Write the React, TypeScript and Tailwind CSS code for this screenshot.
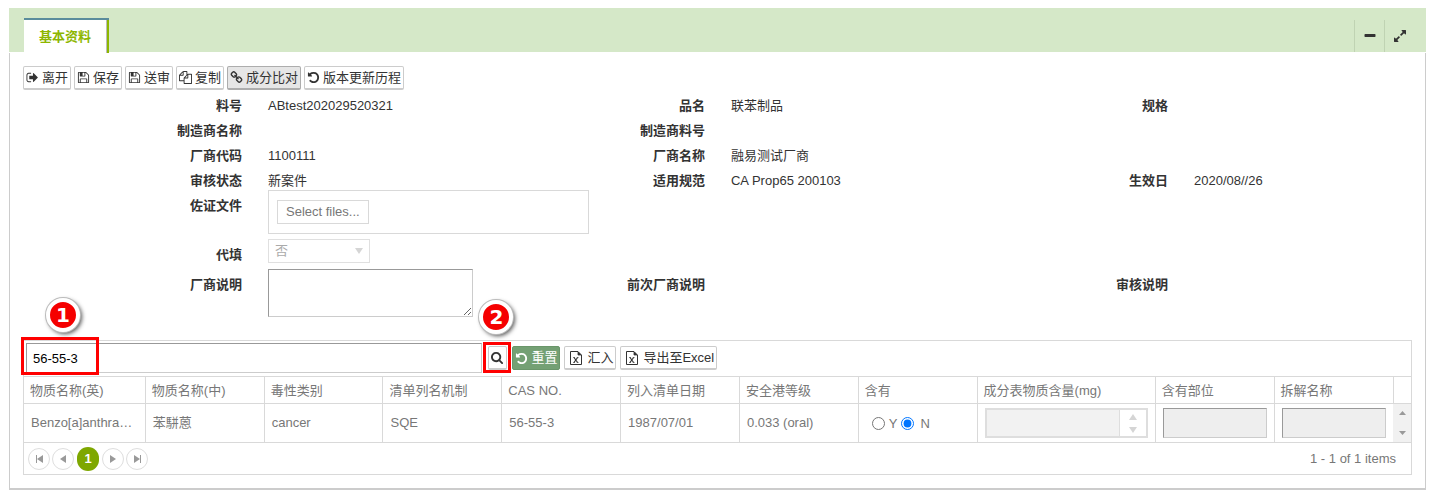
import React from "react";

const ICONS = {
  signOut:
    "M704 1440q0 4 1 20t.5 26.5-3 23.5-10 19.5-20.5 6.5h-320q-119 0-203.5-84.5t-84.5-203.5v-704q0-119 84.5-203.5t203.5-84.5h320q13 0 22.5 9.5t9.5 22.5q0 4 1 20t.5 26.5-3 23.5-10 19.5-20.5 6.5h-320q-66 0-113 47t-47 113v704q0 66 47 113t113 47h312l11.5 1 11.5 3 8 5.5 7 9 2 13.5zm928-544q0 26-19 45l-544 544q-19 19-45 19t-45-19-19-45v-288h-448q-26 0-45-19t-19-45v-384q0-26 19-45t45-19h448v-288q0-26 19-45t45-19 45 19l544 544q19 19 19 45z",
  save: "M512 1536h768v-384h-768v384zm896 0h128v-896q0-14-10-38.5t-20-34.5l-281-281q-10-10-34-20t-39-10v416q0 40-28 68t-68 28h-576q-40 0-68-28t-28-68v-416h-128v1280h128v-416q0-40 28-68t68-28h832q40 0 68 28t28 68v416zm-384-928v-320q0-13-9.5-22.5t-22.5-9.5h-192q-13 0-22.5 9.5t-9.5 22.5v320q0 13 9.5 22.5t22.5 9.5h192q13 0 22.5-9.5t9.5-22.5zm640 32v928q0 40-28 68t-68 28h-1344q-40 0-68-28t-28-68v-1344q0-40 28-68t68-28h928q40 0 88 20t76 48l280 280q28 28 48 76t20 88z",
  copy: "M1696 384q40 0 68 28t28 68v1216q0 40-28 68t-68 28h-960q-40 0-68-28t-28-68v-288h-544q-40 0-68-28t-28-68v-672q0-40 20-88t48-76l408-408q28-28 76-48t88-20h416q40 0 68 28t28 68v328q68-40 128-40h416zm-544 213l-299 299h299v-299zm-640-384l-299 299h299v-299zm196 647l316-316v-416h-384v416q0 40-28 68t-68 28h-416v640h512v-256q0-40 20-88t48-76zm956 804v-1152h-384v416q0 40-28 68t-68 28h-416v640h896z",
  link: "M1520 1216q0-40-28-68l-208-208q-28-28-68-28-42 0-72 32 3 3 19 18.5t21.5 21.5 15 19 13 25.5 3.5 27.5q0 40-28 68t-68 28q-15 0-27.5-3.5t-25.5-13-19-15-21.5-21.5-18.5-19q-33 31-33 73 0 40 28 68l206 207q27 27 68 27 40 0 68-26l147-146q28-28 28-67zm-703-705q0-40-28-68l-206-207q-28-28-68-28-39 0-68 27l-147 146q-28 28-28 67 0 40 28 68l208 208q27 27 68 27 42 0 72-31-3-3-19-18.5t-21.5-21.5-15-19-13-25.5-3.5-27.5q0-40 28-68t68-28q15 0 27.5 3.5t25.5 13 19 15 21.5 21.5 18.5 19q33-31 33-73zm895 705q0 120-85 203l-147 146q-83 83-203 83-121 0-204-85l-206-207q-83-83-83-203 0-123 88-209l-88-88q-86 88-208 88-120 0-204-84l-208-208q-84-84-84-204t85-203l147-146q83-83 203-83 121 0 204 85l206 207q83 83 83 203 0 123-88 209l88 88q86-88 208-88 120 0 204 84l208 208q84 84 84 204z",
  undo: "M1664 896q0 156-61 298t-164 245-245 164-298 61q-172 0-327-72.5t-264-204.5q-7-10-6.5-22.5t8.5-20.5l137-138q10-9 25-9 16 2 23 12 73 95 179 147t225 52q104 0 198.5-40.5t163.5-109.5 109.5-163.5 40.5-198.5-40.5-198.5-109.5-163.5-163.5-109.5-198.5-40.5q-98 0-188 35.5t-160 101.5l137 138q31 30 14 69-17 40-59 40h-448q-26 0-45-19t-19-45v-448q0-42 40-59 39-17 69 14l130 129q107-101 244.5-156.5t284.5-55.5q156 0 298 61t245 164 164 245 61 298z",
  search:
    "M1152 832q0-185-131.5-316.5t-316.5-131.5-316.5 131.5-131.5 316.5 131.5 316.5 316.5 131.5 316.5-131.5 131.5-316.5zm512 832q0 52-38 90t-90 38q-54 0-90-38l-343-342q-179 124-399 124-143 0-273.5-55.5t-225-150-150-225-55.5-273.5 55.5-273.5 150-225 225-150 273.5-55.5 273.5 55.5 225 150 150 225 55.5 273.5q0 220-124 399l343 343q37 37 37 90z",
  expand:
    "M883 1056q0 13-10 23l-332 332 144 144q19 19 19 45t-19 45-45 19h-448q-26 0-45-19t-19-45v-448q0-26 19-45t45-19 45 19l144 144 332-332q10-10 23-10t23 10l114 114q10 10 10 23zm781-864v448q0 26-19 45t-45 19-45-19l-144-144-332 332q-10 10-23 10t-23-10l-114-114q-10-10-10-23t10-23l332-332-144-144q-19-19-19-45t19-45 45-19h448q26 0 45 19t19 45z",
  minus:
    "M1600 736v192q0 40-28 68t-68 28h-1216q-40 0-68-28t-28-68v-192q0-40 28-68t68-28h1216q40 0 68 28t28 68z",
};

function Icon({ name, className = "size-[13px]" }: { name: keyof typeof ICONS; className?: string }) {
  return (
    <svg viewBox="0 0 1792 1792" fill="currentColor" aria-hidden="true" className={`shrink-0 ${className}`}>
      <path d={ICONS[name]} />
    </svg>
  );
}

function ExcelIcon() {
  return (
    <svg viewBox="0 0 12 14" fill="none" stroke="currentColor" aria-hidden="true" className="h-3.5 w-3 shrink-0">
      <path d="M0.5 0.5H8L11.5 4V13.5H0.5Z" />
      <path d="M8 1V4H11Z" fill="currentColor" strokeWidth="0.8" />
      <path d="M4 6.5L7.6 11.5M7.6 6.5L4 11.5" strokeWidth="1.2" />
      <path d="M3 6.5H5M6.8 6.5H8.6M3 11.5H5M6.8 11.5H8.6" strokeWidth="0.6" />
    </svg>
  );
}

function Triangle({ dir, className }: { dir: "up" | "down" | "left" | "right"; className: string }) {
  const d = { up: "M0 10L5 0L10 10Z", down: "M0 0H10L5 10Z", left: "M10 0V10L0 5Z", right: "M0 0L10 5L0 10Z" }[dir];
  return (
    <svg viewBox="0 0 10 10" preserveAspectRatio="none" fill="currentColor" aria-hidden="true" className={className}>
      <path d={d} />
    </svg>
  );
}

const BUTTON =
  "flex h-6 items-center gap-[3px] rounded-[2px] border border-b-2 px-0.5 whitespace-nowrap text-[#333]";
const PLAIN = "border-[#ccc] bg-white";

function Badge({ children, className }: { children: string; className: string }) {
  return (
    <span
      className={`pointer-events-none absolute flex size-[34px] items-center justify-center rounded-full border-4 border-white bg-[#f50000] font-['DejaVu_Sans',sans-serif] text-xl leading-none font-bold text-white shadow-[0_0_0_1px_#bbb,2px_2px_4px_#555] ${className}`}
    >
      {children}
    </span>
  );
}

function Field({ label, htmlFor, children }: { label: string; htmlFor?: string; children?: React.ReactNode }) {
  return (
    <div className="flex items-start">
      <label htmlFor={htmlFor} className="w-[47.3%] shrink-0 text-right leading-[25px] font-bold text-[#333]">
        {label}
      </label>
      <div className="ml-[26px] leading-[25px] whitespace-nowrap">{children}</div>
    </div>
  );
}

const COLUMNS = [
  "物质名称(英)",
  "物质名称(中)",
  "毒性类别",
  "清单列名机制",
  "CAS NO.",
  "列入清单日期",
  "安全港等级",
  "含有",
  "成分表物质含量(mg)",
  "含有部位",
  "拆解名称",
];
const VALUES = ["Benzo[a]anthra…", "苯駢蒽", "cancer", "SQE", "56-55-3", "1987/07/01", "0.033 (oral)"];

const PAGER = "flex size-[22px] items-center justify-center rounded-full border border-[#dedede] text-[#999]";
const DISABLED_BOX = "block h-[30px] w-full border border-t-[#999] border-r-[#ccc] border-b-[#ccc] border-l-[#999] bg-[#eee]";

export default function App() {
  return (
    <div className="pt-2 pr-[6px] pl-[9px] font-['Liberation_Sans','Noto_Sans_CJK_SC',sans-serif] text-[13px] leading-5 text-[#333]">
      <header className="flex h-[45px] items-end border-b border-white bg-[#d5e8c8] pl-[15px]">
        <button className="-mb-px h-[35px] border-t-2 border-t-[#5a8c9c] bg-white">
          <span className="flex h-full items-center border-r-2 border-[#8db600]">
            <span className="flex h-full items-center border-r border-[#bbb] px-[15px] font-bold text-[#8db600]">
              基本资料
            </span>
          </span>
        </button>
        <div className="ml-auto flex h-8 text-[#333]">
          <button aria-label="收起" className="flex w-[30px] items-center justify-center border-l border-[#c0d3b3]">
            <Icon name="minus" className="size-3.5" />
          </button>
          <button aria-label="展开" className="flex w-[42px] items-center border-l border-[#c0d3b3] pl-2">
            <Icon name="expand" className="size-3.5" />
          </button>
        </div>
      </header>

      <main className="border border-t-0 border-b-2 border-[#ccc] px-[13px] pt-[13px] pb-[13px]">
        <div className="flex gap-[3px]">
          <button className={`${BUTTON} ${PLAIN}`}><Icon name="signOut" />离开</button>
          <button className={`${BUTTON} ${PLAIN}`}><Icon name="save" />保存</button>
          <button className={`${BUTTON} ${PLAIN}`}><Icon name="save" />送审</button>
          <button className={`${BUTTON} ${PLAIN}`}><Icon name="copy" />复制</button>
          <button className={`${BUTTON} border-[#adadad] bg-[#e6e6e6]`}><Icon name="link" />成分比对</button>
          <button className={`${BUTTON} ${PLAIN}`}><Icon name="undo" />版本更新历程</button>
        </div>

        <form className="mt-[3px]" onSubmit={(e) => e.preventDefault()}>
          <div className="grid grid-cols-3">
            <Field label="料号">ABtest202029520321</Field>
            <Field label="品名">联苯制品</Field>
            <Field label="规格" />
            <Field label="制造商名称" />
            <Field label="制造商料号" />
            <div />
            <Field label="厂商代码">1100111</Field>
            <Field label="厂商名称">融易测试厂商</Field>
            <div />
            <Field label="审核状态">新案件</Field>
            <Field label="适用规范">CA Prop65 200103</Field>
            <Field label="生效日">2020/08//26</Field>
          </div>
          <div className="grid min-h-[49px] grid-cols-3">
            <Field label="佐证文件" htmlFor="files">
              <div className="-mt-[3px] h-11 w-[321px] border border-[#d9d9d9] px-2 pt-[9px]">
                <button id="files" type="button" className="block h-6 border border-[#d9d9d9] bg-white px-2 leading-5 text-[#777]">
                  Select files...
                </button>
              </div>
            </Field>
          </div>
          <div className="grid min-h-[30px] grid-cols-3">
            <Field label="代填" htmlFor="proxy">
              <div className="relative -mt-[3px]">
                <select
                  id="proxy"
                  disabled
                  className="block h-6 w-[102px] appearance-none border border-[#e0e0e0] bg-white pl-[6px] leading-5 text-[#aaa] opacity-100"
                >
                  <option>否</option>
                </select>
                <Triangle dir="down" className="pointer-events-none absolute top-[9px] right-[7px] h-1.5 w-2 text-[#d5d5d5]" />
              </div>
            </Field>
          </div>
          <div className="grid min-h-[45px] grid-cols-3">
            <Field label="厂商说明" htmlFor="note">
              <textarea
                id="note"
                className="-mt-[3px] block h-12 w-[205px] resize border border-t-[#999] border-r-[#ccc] border-b-[#ccc] border-l-[#999] bg-white"
              />
            </Field>
            <Field label="前次厂商说明" />
            <Field label="审核说明" />
          </div>
        </form>

        <section className="mt-[23px] border border-[#d9d9d9] text-[#777]">
          <div className="flex h-[35px] items-start px-0.5 pt-0.5">
            <div className="relative w-[33%]">
              <input
                aria-label="搜索"
                defaultValue="56-55-3"
                className="block h-[30px] w-full border border-t-[#999] border-r-[#ccc] border-b-[#ccc] border-l-[#999] bg-white px-[6px] text-black"
              />
              <span className="pointer-events-none absolute -top-[6px] -left-[5px] h-[38px] w-[78px] border-3 border-[#f00]" />
              <Badge className="-top-[45px] left-5">1</Badge>
            </div>
            <div className="relative mt-[3px] ml-[6px]">
              <button aria-label="查询" className={`${BUTTON} ${PLAIN}`}><Icon name="search" /></button>
              <span className="pointer-events-none absolute -top-1 -left-[5px] h-[31px] w-7 border-3 border-[#f00]" />
              <Badge className="-top-[46px] -left-[9px]">2</Badge>
            </div>
            <div className="mt-[3px] ml-[5px] flex gap-1">
              <button className="flex h-6 items-center gap-[3px] rounded-[2px] border border-[#6a966a] bg-[#74a074] px-0.5 whitespace-nowrap text-white">
                <Icon name="undo" />重置
              </button>
              <button className={`${BUTTON} ${PLAIN} pl-[5px]`}><ExcelIcon /><span className="pl-0.5">汇入</span></button>
              <button className={`${BUTTON} ${PLAIN} pl-[5px]`}><ExcelIcon /><span className="pl-0.5">导出至Excel</span></button>
            </div>
          </div>

          <table className="w-full table-fixed border-collapse border-y border-[#d9d9d9]">
            <colgroup>
              <col className="w-[8.75%]" />
              <col span={7} />
              <col className="w-[12.85%]" />
              <col span={2} />
              <col className="w-[18px]" />
            </colgroup>
            <thead>
              <tr className="h-[27px] border-b border-[#d9d9d9]">
                {COLUMNS.map((c) => (
                  <th key={c} className="border-r border-[#d9d9d9] px-[6px] pt-0.5 text-left font-normal whitespace-nowrap">
                    {c}
                  </th>
                ))}
                <td />
              </tr>
            </thead>
            <tbody>
              <tr className="h-[39px]">
                {VALUES.map((v) => (
                  <td key={v} className="border-r border-[#d9d9d9] px-[7px] whitespace-nowrap">
                    {v}
                  </td>
                ))}
                <td className="border-r border-[#d9d9d9] px-[13px]">
                  <div className="flex items-center gap-1">
                    <input id="has-y" name="has" type="radio" className="size-[13px]" />
                    <label htmlFor="has-y" className="pt-0.5">Y</label>
                    <input id="has-n" name="has" type="radio" defaultChecked className="size-[13px]" />
                    <label htmlFor="has-n" className="pt-0.5 pl-0.5">N</label>
                  </div>
                </td>
                <td className="border-r border-[#d9d9d9] px-[7px]">
                  <div className="flex h-[30px] border-2 border-[#dedede]">
                    <input aria-label="成分表物质含量(mg)" disabled className="min-w-0 flex-1 bg-[#f2f2f2]" />
                    <div className="flex w-[27px] flex-col items-center justify-around border-l border-[#dedede] text-[#d5d5d5]">
                      <button aria-label="增加" disabled><Triangle dir="up" className="h-1.5 w-2" /></button>
                      <button aria-label="减少" disabled><Triangle dir="down" className="h-1.5 w-2" /></button>
                    </div>
                  </div>
                </td>
                <td className="border-r border-[#d9d9d9] px-[7px]">
                  <input aria-label="含有部位" disabled className={DISABLED_BOX} />
                </td>
                <td className="px-[7px]">
                  <input aria-label="拆解名称" disabled className={DISABLED_BOX} />
                </td>
                <td className="bg-[#f1f1f1] p-0 text-[#999]">
                  <div className="flex h-6 flex-col items-center justify-between">
                    <Triangle dir="up" className="h-1 w-[7px]" />
                    <Triangle dir="down" className="h-1 w-[7px]" />
                  </div>
                </td>
              </tr>
            </tbody>
          </table>

          <footer className="flex h-[31px] items-center justify-between pr-[15px] pl-1">
            <nav aria-label="分页" className="flex items-center gap-0.5">
              <button aria-label="首页" className={PAGER}>
                <span className="h-2 w-px bg-[#999]" /><Triangle dir="left" className="h-2 w-1.5" />
              </button>
              <button aria-label="上一页" className={PAGER}><Triangle dir="left" className="h-2 w-1.5" /></button>
              <button className="mx-px h-6 w-[22px] rounded-full bg-[#7ea700] text-center leading-6 font-bold text-white">1</button>
              <button aria-label="下一页" className={PAGER}><Triangle dir="right" className="h-2 w-1.5" /></button>
              <button aria-label="末页" className={PAGER}>
                <Triangle dir="right" className="h-2 w-1.5" /><span className="h-2 w-px bg-[#999]" />
              </button>
            </nav>
            <span>1 - 1 of 1 items</span>
          </footer>
        </section>
      </main>
    </div>
  );
}
